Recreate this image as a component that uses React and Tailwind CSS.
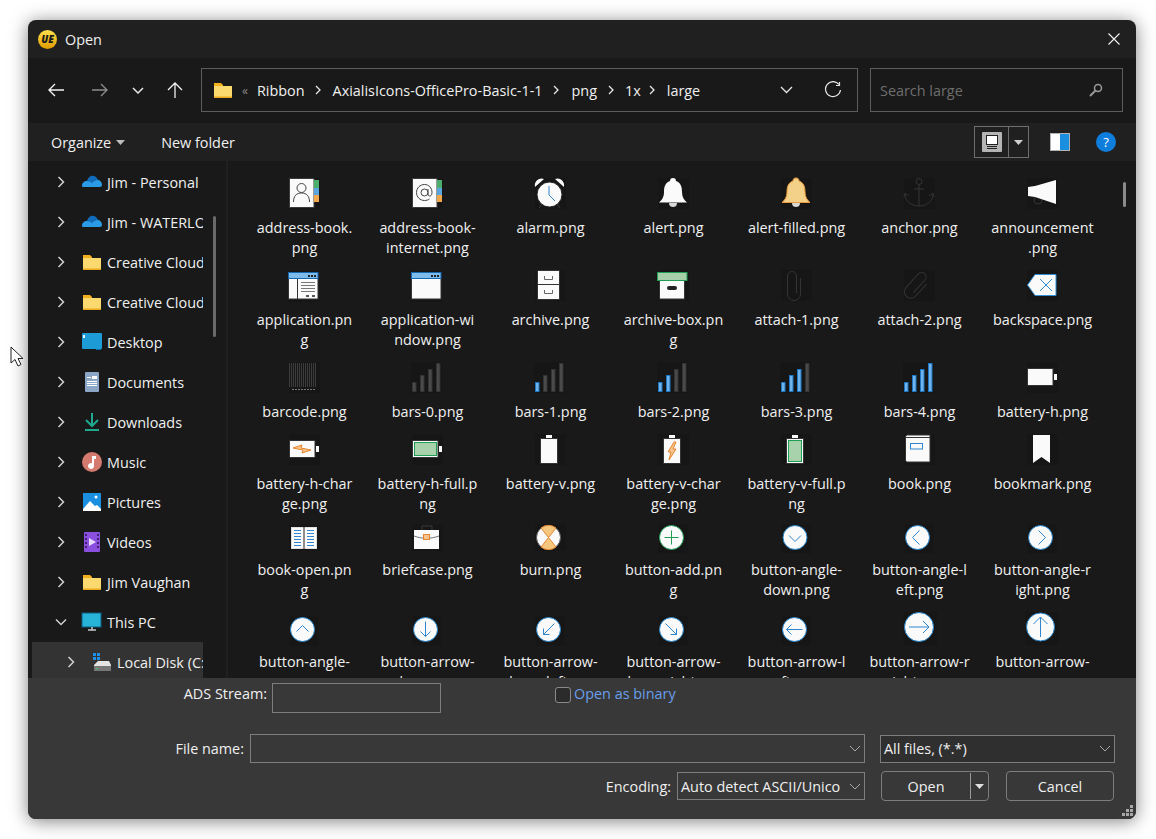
import React from "react";

const Line = ({ d, c = "#333", w = 1 }) => <path d={d} fill="none" stroke={c} strokeWidth={w} />;
const Svg = ({ className = "", size = 32, box, children }) => (
  <svg width={size} height={size} viewBox={box || `0 0 ${size} ${size}`} className={`overflow-visible ${className}`}>
    {children}
  </svg>
);
// faint dark square the pngs leave behind them
const Back = ({ x = 0, y = 0, w = 31, h = 31 }) => <rect x={x} y={y} width={w} height={h} fill="#161616" />;

const Tabs = () => (
  <>
    <rect x="25" y="2" width="5" height="8" fill="#4caf6e" />
    <rect x="25" y="10" width="5" height="7" fill="#5aa5e0" />
    <rect x="25" y="17" width="5" height="7" fill="#f2a74c" />
  </>
);
const AddressBook = () => (
  <>
    <Back />
    <rect x="0.5" y="0.5" width="24.5" height="29" fill="#fafafa" stroke="#3a3a3a" />
    <Tabs />
    <circle cx="12.5" cy="10" r="4.5" fill="none" stroke="#444" />
    <Line c="#444" d="M4.5 24c0-6 3-9 8-9s8 3 8 9" />
  </>
);
const AddressInternet = () => (
  <>
    <Back />
    <rect x="0.5" y="0.5" width="24.5" height="29" fill="#fafafa" stroke="#3a3a3a" />
    <Tabs />
    <circle cx="12.5" cy="14.5" r="3.5" fill="none" stroke="#444" />
    <Line c="#444" d="M16 11v5c0 3 4 3 4-1.5C20 10 17 6.5 12.5 6.5S4.5 10 4.5 14.5 8 22.500 12.500 22.500c2 0 3.500-.5 5-1.500" />
  </>
);
const Alarm = () => (
  <>
    <Back />
    <path d="M0 9C-1 3 4-1 9 1ZM29 9c1-6-4-10-9-8Z" fill="#fafafa" />
    <Line c="#3a3a3a" d="M4 30l3-4M25 30l-3-4" />
    <circle cx="14.500" cy="16.500" r="12.500" fill="#fafafa" stroke="#222" />
    <Line c="#2f86cf" d="M14 8v9l6 6" />
  </>
);
const Bell = ({ fill, stroke }) => (
  <>
    <Back />
    <path d="M15 0c2 0 3 1 3 3 5 2 6 6 6 11 0 5 2 8 5 10.500H1C4 22 6 19 6 14c0-5 1-9 6-11 0-2 1-3 3-3Z" fill={fill} stroke={stroke} />
    <path d="M11 25h8c0 3-2 4-4 4s-4-1-4-4Z" fill="#d8d8d8" />
  </>
);
const Anchor = () => (
  <>
    <Back />
    <g fill="none" stroke="#343434" strokeWidth="1">
      <circle cx="15" cy="3.500" r="3" />
      <path d="M15 7v21M10 11h10M1 16c0 8 7 12 14 12s14-4 14-12M0 19l1-4 4 3M30 19l-1-4-4 3" />
    </g>
  </>
);
const Announcement = () => (
  <>
    <Back />
    <circle cx="11" cy="22" r="4" fill="none" stroke="#333" />
    <path d="M1 9l7-1 21-6v24l-21-7-7-1Z" fill="#fafafa" />
  </>
);
const Application = ({ detail }) => (
  <>
    <Back x="-1" y="1" />
    <rect x="-0.500" y="8" width="29.500" height="21" fill="#fafafa" stroke="#333" />
    <rect x="-0.500" y="2.500" width="29.500" height="6" fill="#7dbbea" stroke="#1567ae" />
    <path d="M19 5h2v2h-2zM22 5h2v2h-2zM25 5h2v2h-2z" fill="#222" />
    {detail && (
      <>
        <Line c="#333" d="M8.500 9v20" />
        <Line c="#777" d="M12 12.500h14M12 15.500h14M12 18.500h14M12 21.500h14" />
        <Line c="#555" w="2" d="M17 26h3M23 26h3" />
      </>
    )}
  </>
);
const Archive = () => (
  <>
    <Back x="0" />
    <rect x="2.500" y="0.500" width="22" height="29" fill="#fafafa" stroke="#333" />
    <Line c="#333" d="M2 14.500h23" />
    <Line c="#666" d="M9.500 6v3.500h8V6M9.500 20v3.500h8V20" />
  </>
);
const ArchiveBox = () => (
  <>
    <Back x="0" />
    <rect x="1.500" y="10" width="25" height="19" fill="#fafafa" stroke="#333" />
    <rect x="-0.500" y="2.500" width="29.500" height="8" fill="#a5d0a9" stroke="#1f9d55" />
    <rect x="9" y="16" width="10" height="4" rx="2" fill="#222" />
  </>
);
const Clip = () => <Line c="#343434" d="M19.500 8v16a6.500 6.500 0 0 1-13 0V6a4.500 4.500 0 0 1 9 0v17" />;
const Attach1 = () => (
  <>
    <Back />
    <Clip />
  </>
);
const Attach2 = () => (
  <>
    <Back />
    <g transform="rotate(42 13 15)"><Clip /></g>
  </>
);
const Backspace = () => (
  <>
    <Back />
    <path d="M8 4.500h21v21H8L0.500 15Z" fill="#fafafa" stroke="#2f8ed6" />
    <Line c="#2f8ed6" d="M13 9l12 12M25 9L13 21" />
  </>
);
const Barcode = () => (
  <>
    <Back />
    <g fill="none" stroke="#3c3c3c">
      <path d="M0.500 1v24M2.500 1v24M4.500 1v24M6.500 1v24M8.500 1v24M10.500 1v24M12.500 1v24M14.500 1v24M16.500 1v24M18.500 1v24M20.500 1v24M22.500 1v24M24.500 1v24M26.500 1v24" />
      <path d="M3 27.500h24" strokeDasharray="2 1" stroke="#777" />
    </g>
  </>
);
const Bars = ({ on }) => (
  <>
    <Back x="-1" />
    {[[0, 20], [8, 13], [16, 7], [24, 1]].map(([x, top], i) => (
      <rect
        key={x}
        x={x + 0.5}
        y={top + 0.5}
        width="3.500"
        height={29 - top}
        fill={i < on ? "#6fb3ea" : "#4a4a4a"}
        stroke={i < on ? "#1c76c4" : "#333"}
      />
    ))}
  </>
);
const Bolt = ({ d }) => <path d={d} fill="#f6c58e" stroke="#e8852c" strokeWidth="1" />;
const BatteryH = ({ children }) => (
  <>
    <Back />
    <rect x="0.500" y="6.500" width="25.500" height="17" fill="#fafafa" stroke="#333" />
    <rect x="27" y="12" width="3" height="6" fill="#fafafa" />
    {children}
  </>
);
const BatteryV = ({ children }) => (
  <>
    <Back />
    <rect x="11" y="1" width="6" height="3" fill="#fafafa" />
    <rect x="5.500" y="4.500" width="17" height="25" fill="#fafafa" stroke="#333" />
    {children}
  </>
);
const Book = () => (
  <>
    <Back />
    <path d="M1.500 3c0-1 1-2 2-2H26v27H3.500c-1 0-2-1-2-2Z" fill="#fafafa" stroke="#333" />
    <Line c="#333" d="M2 3.500h24" />
    <rect x="6.500" y="9.500" width="12" height="5.500" fill="none" stroke="#2f86cf" />
  </>
);
const Bookmark = () => (
  <>
    <Back />
    <path d="M6 1h17v28l-8.500-6L6 29Z" fill="#fafafa" />
  </>
);
const BookOpen = () => (
  <>
    <Back y="5" h="26" />
    <rect x="2.500" y="7.500" width="25" height="21" fill="#fafafa" stroke="#e0e0e0" />
    <Line c="#222" d="M15 7v22" />
    <Line c="#2f86cf" d="M5 10.500h7M5 13.500h7M5 16.500h7M5 19.500h7M5 22.500h7M5 25.500h7M18 10.500h7M18 13.500h7M18 16.500h7M18 19.500h7M18 22.500h7M18 25.500h7" />
  </>
);
const Briefcase = () => (
  <>
    <Back y="5" h="26" />
    <Line c="#3a3a3a" d="M10 10V6h10v4" />
    <rect x="2" y="10" width="25" height="19" fill="#fafafa" />
    <Line c="#777" d="M2 16c8 3 17 3 25 0" />
    <rect x="11.500" y="14.500" width="6" height="5" fill="#f6c58e" stroke="#e8852c" />
  </>
);
const Burn = () => (
  <>
    <Back y="4" h="27" />
    <circle cx="13.500" cy="17.500" r="12" fill="#fafafa" stroke="#555" />
    <path d="M13.500 17.500L6 8a12 12 0 0 1 15 0ZM13.500 17.500L6 27a12 12 0 0 0 15 0Z" fill="#f4c67e" stroke="#e8852c" />
  </>
);
const Circle = ({ cx = 13.5, cy = 17.5, r = 12, c = "#1f7fc6", d }) => (
  <>
    <Back x={cx - r - 1} y={cy - r - 1} w={2 * r + 5} h={2 * r + 5} />
    <circle cx={cx} cy={cy} r={r} fill="#fafafa" stroke={c} />
    <g transform={`translate(${cx} ${cy})`}>
      <Line c={c === "#1f7fc6" ? "#2f86cf" : c} d={d} />
    </g>
  </>
);

const rows = [
  [
    [["address-book.", "png"], <AddressBook />],
    [["address-book-", "internet.png"], <AddressInternet />],
    [["alarm.png"], <Alarm />],
    [["alert.png"], <Bell fill="#fafafa" />],
    [["alert-filled.png"], <Bell fill="#f3d188" stroke="#ef9a3c" />],
    [["anchor.png"], <Anchor />],
    [["announcement", ".png"], <Announcement />],
  ],
  [
    [["application.pn", "g"], <Application detail />],
    [["application-wi", "ndow.png"], <Application />],
    [["archive.png"], <Archive />],
    [["archive-box.pn", "g"], <ArchiveBox />],
    [["attach-1.png"], <Attach1 />],
    [["attach-2.png"], <Attach2 />],
    [["backspace.png"], <Backspace />],
  ],
  [
    [["barcode.png"], <Barcode />],
    [["bars-0.png"], <Bars on={0} />],
    [["bars-1.png"], <Bars on={1} />],
    [["bars-2.png"], <Bars on={2} />],
    [["bars-3.png"], <Bars on={3} />],
    [["bars-4.png"], <Bars on={4} />],
    [["battery-h.png"], <BatteryH />],
  ],
  [
    [["battery-h-char", "ge.png"], <BatteryH><Bolt d="M4 14l9-3-1 3 10 2-9 3 1-3-10-2Z" /></BatteryH>],
    [["battery-h-full.p", "ng"], <BatteryH><rect x="2.500" y="8.500" width="22" height="13" fill="#a8d2ac" stroke="#1f9d55" /></BatteryH>],
    [["battery-v.png"], <BatteryV />],
    [["battery-v-char", "ge.png"], <BatteryV><Bolt d="M16 8l-6 10h3l-2 8 7-11h-3l3-7Z" /></BatteryV>],
    [["battery-v-full.p", "ng"], <BatteryV><rect x="7.500" y="6.500" width="13" height="21" fill="#a8d2ac" stroke="#1f9d55" /></BatteryV>],
    [["book.png"], <Book />],
    [["bookmark.png"], <Bookmark />],
  ],
  [
    [["book-open.pn", "g"], <BookOpen />],
    [["briefcase.png"], <Briefcase />],
    [["burn.png"], <Burn />],
    [["button-add.pn", "g"], <Circle c="#1f9d55" d="M-7 0H7M0-7V7" />],
    [["button-angle-", "down.png"], <Circle cx={14} d="M-6-2L0 4 6-2" />],
    [["button-angle-l", "eft.png"], <Circle d="M2-7L-5 0 2 7" />],
    [["button-angle-r", "ight.png"], <Circle d="M-2-7L5 0-2 7" />],
  ],
  [
    [["button-angle-", "up.png"], <Circle d="M-6 2L0-4 6 2" />],
    [["button-arrow-", "down.png"], <Circle d="M0-8V7M-5 2L0 7 5 2" />],
    [["button-arrow-", "down-left.png"], <Circle d="M6-6L-5 5M-5-1V5H1" />],
    [["button-arrow-", "down-right.png"], <Circle d="M-6-6L5 5M5-1V5H-1" />],
    [["button-arrow-l", "eft.png"], <Circle d="M8 0H-8M-3-5L-8 0-3 5" />],
    [["button-arrow-r", "ight.png"], <Circle cx={15} cy={15} r={14.5} d="M-10 0H10M4-6L10 0 4 6" />],
    [["button-arrow-", "up.png"], <Circle cy={15} r={14} d="M0 10V-10M-7-3L0-10 7-3" />],
  ],
];
const rowHeights = ["h-[92px]", "h-[92px]", "h-[72px]", "h-[86px]", "h-[92px]", "h-[92px]"];

const Folder = () => (
  <Svg size={20}>
    <path d="M1 3h7l2 2v2H1Z" fill="#f2b01e" />
    <path d="M1 6h18v12H1Z" fill="#fbd96f" />
    <path d="M1 16.500h18V18H1Z" fill="#eaa91c" />
  </Svg>
);
const Cloud = () => (
  <Svg size={20}>
    <path d="M5 9c1-4 4-6 7-5 2 .5 3 2 4 4-3 0-5 1-6 3-2-1-4-1-5-2Z" fill="#0f6cbd" />
    <path d="M0 14c0-3 2-5 5-5 2 0 4 1 5 2 1-2 3-3 6-3 2 0 4 2 4 5 0 1-1 2-2 2H2c-1 0-2 0-2-1Z" fill="#2a9be8" />
  </Svg>
);
const navItems = [
  ["Jim - Personal", <Cloud />],
  ["Jim - WATERLOO", <Cloud />],
  ["Creative Cloud Files", <Folder />],
  ["Creative Cloud Files", <Folder />],
  ["Desktop", (
    <Svg size={20}>
      <rect y="1" width="20" height="16" rx="1" fill="#1d9bd7" />
      <rect x="1" y="3" width="2" height="3" fill="#e6f6ff" />
      <path d="M14 17h5v1h-5z" fill="#0c6fa8" />
    </Svg>
  )],
  ["Documents", (
    <Svg size={20}>
      <rect x="3" y="0" width="14" height="20" rx="1" fill="#8ba6c6" />
      <path d="M5 5h4v1H5zM10 4h5v3h-5zM5 9h10v1H5zM5 11h10v1H5zM5 13h10v1H5z" fill="#fff" />
    </Svg>
  )],
  ["Downloads", (
    <Svg size={20}>
      <path d="M10 1v12M4 8l6 6 6-6" fill="none" stroke="#1fa98f" strokeWidth="2" />
      <path d="M3 18h14" stroke="#1fa98f" strokeWidth="2" />
    </Svg>
  )],
  ["Music", (
    <Svg size={20}>
      <circle cx="10" cy="10" r="10" fill="#d47a6e" />
      <path d="M10 4h4v3h-2v7a3 3 0 1 1-2-2.800Z" fill="#fff" />
    </Svg>
  )],
  ["Pictures", (
    <Svg size={20}>
      <rect x="1" y="1" width="18" height="18" fill="#1a8fe0" />
      <path d="M1 17l7-8 5 5 2-1 4 4v2H1Z" fill="#fff" />
      <circle cx="14" cy="5" r="1.500" fill="#fff" />
    </Svg>
  )],
  ["Videos", (
    <Svg size={20}>
      <rect x="2" y="0" width="16" height="20" rx="1" fill="#8b4fe0" />
      <path d="M3 2h2v2H3zM3 6h2v2H3zM3 10h2v2H3zM3 14h2v2H3zM15 2h2v2h-2zM15 6h2v2h-2zM15 10h2v2h-2zM15 14h2v2h-2z" fill="#3d2070" />
      <path d="M7 6l7 4-7 4Z" fill="#e8dcff" />
    </Svg>
  )],
  ["Jim Vaughan", <Folder />],
];

const Chevron = ({ open }) => (
  <svg width="12" height="12" viewBox="0 0 12 12" className="shrink-0">
    <path d={open ? "M1 3.500l5 5 5-5" : "M3.500 1l5 5-5 5"} fill="none" stroke="#d0d0d0" strokeWidth="1.500" />
  </svg>
);

function NavRow({ label, icon, open }) {
  return (
    <div className="flex h-10 items-center whitespace-nowrap pl-[27px]">
      <Chevron open={open} />
      <div className="ml-[15px] h-5 w-5 shrink-0">{icon}</div>
      <span className="ml-[5px]">{label}</span>
    </div>
  );
}

function FileItem({ lines, icon, height }) {
  return (
    <div className={`flex w-[123px] flex-col items-center ${height}`}>
      <div className="h-[46px] w-8 pt-[6px]">
        <Svg>{icon}</Svg>
      </div>
      <div className="whitespace-nowrap text-center leading-5">
        {lines.map((l) => (
          <div key={l}>{l}</div>
        ))}
      </div>
    </div>
  );
}

const SmallCaret = ({ color = "#bdbdbd" }) => (
  <svg width="9" height="5" viewBox="0 0 9 5" className="shrink-0">
    <path d="M0 0h9L4.500 5Z" fill={color} />
  </svg>
);
const SelectArrow = () => (
  <svg width="12" height="7" viewBox="0 0 12 7" className="shrink-0">
    <path d="M1 1l5 5 5-5" fill="none" stroke="#a8a8a8" />
  </svg>
);
const Crumb = () => (
  <svg width="8" height="10" viewBox="0 0 8 10" className="shrink-0">
    <path d="M2 1l4 4-4 4" fill="none" stroke="#e6e6e6" strokeWidth="1.300" />
  </svg>
);

export default function App() {
  return (
    <div className="relative h-[839px] w-[1156px] overflow-hidden bg-white pl-[28px] pt-5 text-[14.4px] leading-[21px] text-[#f0f0f0] [font-family:'Open_Sans',sans-serif]">
      {/* mouse pointer */}
      <svg width="14" height="22" viewBox="0 0 14 22" className="absolute left-[10px] top-[346px]">
        <path d="M1 1v16l4-3.500 3 6.500 3-1.500-3-6h5Z" fill="#fff" stroke="#222" />
      </svg>

      <div className="flex h-[799px] w-[1108px] flex-col overflow-hidden rounded-lg bg-[#202020] shadow-[0_2px_18px_rgba(0,0,0,0.5)]">
        {/* title bar */}
        <div className="flex h-[38px] shrink-0 items-center pl-[10px] pr-[16px]">
          <svg width="19" height="19" viewBox="0 0 19 19">
            <defs>
              <linearGradient id="ue" x1="0" y1="0" x2="0" y2="1">
                <stop offset="0" stopColor="#ffe14d" />
                <stop offset="1" stopColor="#e09a00" />
              </linearGradient>
            </defs>
            <circle cx="9.500" cy="9.500" r="9.500" fill="url(#ue)" />
            <text x="9.500" y="13" textAnchor="middle" fontSize="10" fontWeight="800" fontStyle="italic" fill="#1a1a1a">UE</text>
          </svg>
          <span className="ml-2">Open</span>
          <svg width="12" height="12" viewBox="0 0 12 12" className="ml-auto">
            <path d="M0.500 0.500l11 11M11.500 0.500l-11 11" stroke="#f0f0f0" strokeWidth="1.100" />
          </svg>
        </div>

        {/* navigation row */}
        <div className="flex h-[65px] shrink-0 items-start bg-[#191919] pt-[10px]">
          <div className="flex h-11 w-[173px] shrink-0 items-center pl-[20px]">
            <svg width="16" height="14" viewBox="0 0 16 14">
              <path d="M16 7H1M7 1L1 7l6 6" fill="none" stroke="#f2f2f2" strokeWidth="1.400" />
            </svg>
            <svg width="16" height="14" viewBox="0 0 16 14" className="ml-[28px]">
              <path d="M0 7h15M9 1l6 6-6 6" fill="none" stroke="#8c8c8c" strokeWidth="1.400" />
            </svg>
            <svg width="12" height="7" viewBox="0 0 12 7" className="ml-[24px]">
              <path d="M1 1l5 5 5-5" fill="none" stroke="#e6e6e6" strokeWidth="1.500" />
            </svg>
            <svg width="16" height="16" viewBox="0 0 16 16" className="ml-[23px]">
              <path d="M8 16V1M1 8l7-7 7 7" fill="none" stroke="#f2f2f2" strokeWidth="1.300" />
            </svg>
          </div>
          <div className="flex h-11 w-[657px] shrink-0 items-center whitespace-nowrap border border-[#5c5c5c] bg-[#191919] pl-[11px]">
            <div className="h-5 w-5 shrink-0"><Folder /></div>
            <span className="ml-[9px] text-[12px] text-[#8a8a8a]">«</span>
            <span className="ml-[9px]">Ribbon</span>
            <span className="ml-[9px] mr-[11px]"><Crumb /></span>
            <span>AxialisIcons-OfficePro-Basic-1-1</span>
            <span className="ml-[9px] mr-[12px]"><Crumb /></span>
            <span>png</span>
            <span className="mx-[10px]"><Crumb /></span>
            <span>1x</span>
            <span className="ml-[7px] mr-[11px]"><Crumb /></span>
            <span>large</span>
            <svg width="13" height="8" viewBox="0 0 13 8" className="ml-auto">
              <path d="M1 1l5.500 5.500L12 1" fill="none" stroke="#e6e6e6" strokeWidth="1.300" />
            </svg>
            <svg width="18" height="18" viewBox="0 0 18 18" className="ml-[31px] mr-[15px]">
              <path d="M15 3.500A7.500 7.500 0 1 0 16.500 9M15.500 1v3.500H12" fill="none" stroke="#e6e6e6" strokeWidth="1.200" />
            </svg>
          </div>
          <div className="ml-[12px] flex h-11 w-[253px] shrink-0 items-center justify-between border border-[#5c5c5c] px-[9px] text-[#6e6e6e]">
            <span>Search large</span>
            <svg width="14" height="14" viewBox="0 0 14 14" className="mr-[10px]">
              <circle cx="9" cy="5" r="3.500" fill="none" stroke="#9a9a9a" strokeWidth="1.500" />
              <path d="M6.500 7.500L1 13" stroke="#9a9a9a" strokeWidth="2" />
            </svg>
          </div>
        </div>

        {/* toolbar */}
        <div className="flex h-[38px] shrink-0 items-center pl-[23px]">
          <span>Organize</span>
          <span className="ml-[5px]"><SmallCaret /></span>
          <span className="ml-[36px]">New folder</span>
          <div className="ml-auto flex h-8 w-[55px] border border-[#6e6e6e]">
            <div className="flex w-[34px] items-center justify-center border-r border-[#6e6e6e]">
              <svg width="20" height="20" viewBox="0 0 20 20">
                <rect width="20" height="20" rx="1" fill="#b4b4b4" />
                <rect x="4.500" y="3.500" width="11" height="9" fill="#fff" stroke="#222" />
                <path d="M5 14.500h10M5 16.500h10" stroke="#222" />
              </svg>
            </div>
            <div className="flex flex-1 items-center justify-center"><SmallCaret color="#cfcfcf" /></div>
          </div>
          <svg width="20" height="20" viewBox="0 0 20 20" className="ml-[21px]">
            <rect x="0.500" y="1.500" width="19" height="17" fill="#fff" stroke="#b4b4b4" />
            <rect x="10" y="2" width="9" height="16" fill="#1a8fe0" />
          </svg>
          <div className="ml-[26px] mr-[20px] flex h-5 w-5 items-center justify-center rounded-full bg-[#0f7ddb] text-[13px] text-white">?</div>
        </div>

        {/* panes */}
        <div className="flex h-[517px] shrink-0 overflow-hidden bg-[#191919]">
          <div className="w-[175px] shrink-0 overflow-hidden pt-px">
            {navItems.map(([label, icon], i) => (
              <NavRow key={i} label={label} icon={icon} />
            ))}
            <NavRow label="This PC" open icon={
              <Svg size={20}>
                <rect y="1" width="19" height="14" fill="#27b4d8" stroke="#0c5f80" />
                <path d="M6 18h8M10 15v3" stroke="#c8c8c8" strokeWidth="1.500" />
              </Svg>
            } />
            <div className="ml-1 flex h-10 items-center whitespace-nowrap bg-[#333333] pl-[33px]">
              <Chevron />
              <div className="ml-[15px] h-5 w-5 shrink-0">
                <Svg size={20}>
                  <path d="M1 1h3v3H1zM5 1h3v3H5zM1 5h3v3H1zM5 5h3v3H5z" fill="#1e90e6" />
                  <path d="M3 12l3-3h11l2 4v6H2v-6Z" fill="#e4e4e4" />
                  <rect x="2" y="14" width="17" height="5" fill="#777" />
                  <rect x="4" y="16" width="2" height="1" fill="#3fd06a" />
                </Svg>
              </div>
              <span className="ml-[5px]">Local Disk (C:)</span>
            </div>
          </div>
          <div className="w-[23px] shrink-0 pl-[10px] pt-[55px]">
            <div className="h-[121px] w-[3px] rounded-full bg-[#6a6a6a]" />
          </div>
          <div className="w-[2px] shrink-0 bg-[#202020]" />

          <div className="flex-1 overflow-hidden pl-[15px] pt-[11px]">
            {rows.map((row, i) => (
              <div key={i} className="flex">
                {row.map(([lines, icon]) => (
                  <FileItem key={lines.join("")} lines={lines} icon={icon} height={rowHeights[i]} />
                ))}
              </div>
            ))}
          </div>
          <div className="w-[13px] shrink-0 pt-[21px]">
            <div className="h-[25px] w-[3px] rounded-full bg-[#8a8a8a]" />
          </div>
        </div>

        {/* bottom form */}
        <div className="relative flex-1 bg-[#383838] pt-[5px]">
          <div className="flex h-[30px]">
            <span className="ml-[153px] w-[86px] text-right">ADS Stream:</span>
            <div className="ml-[5px] h-[30px] w-[169px] border border-[#7d7d7d]" />
            <div className="ml-[114px] mt-[4px] h-4 w-4 rounded-[3px] border border-[#8a8a8a] bg-[#2b2b2b]" />
            <span className="ml-[3px] text-[#6a9eea]">Open as binary</span>
          </div>
          <div className="mt-[21px] flex h-[29px] items-center">
            <span className="ml-[147px] w-[69px] text-right">File name:</span>
            <div className="ml-[6px] flex h-[29px] w-[615px] items-center justify-end border border-[#7d7d7d] pr-[3px]">
              <SelectArrow />
            </div>
            <div className="ml-[15px] flex h-[28px] w-[235px] items-center justify-between border border-[#7d7d7d] bg-[#2f2f2f] pl-[3px] pr-[3px]">
              <span>All files, (*.*)</span>
              <SelectArrow />
            </div>
          </div>
          <div className="mt-[8px] flex h-[30px] items-center">
            <span className="ml-[576px] w-[67px] text-right">Encoding:</span>
            <div className="ml-[6px] flex h-[28px] w-[188px] items-center justify-between overflow-hidden whitespace-nowrap border border-[#7d7d7d] pl-[3px] pr-[3px]">
              <span>Auto detect ASCII/Unico</span>
              <SelectArrow />
            </div>
            <div className="ml-[16px] flex h-[30px] w-[108px] items-center rounded border border-[#7d7d7d]">
              <span className="w-[88px] text-center">Open</span>
              <div className="h-[26px] w-px bg-[#9a9a9a]" />
              <span className="ml-[4px]"><SmallCaret color="#e0e0e0" /></span>
            </div>
            <div className="ml-[17px] flex h-[30px] w-[108px] items-center justify-center rounded border border-[#7d7d7d]">Cancel</div>
          </div>
          {/* resize grip */}
          <svg width="12" height="12" viewBox="0 0 12 12" className="absolute bottom-[2px] right-[2px]">
            <path d="M8 0h3v3H8zM4 4h3v3H4zM8 4h3v3H8zM0 8h3v3H0zM4 8h3v3H4zM8 8h3v3H8z" fill="#a8a8a8" />
          </svg>
        </div>
      </div>
    </div>
  );
}
